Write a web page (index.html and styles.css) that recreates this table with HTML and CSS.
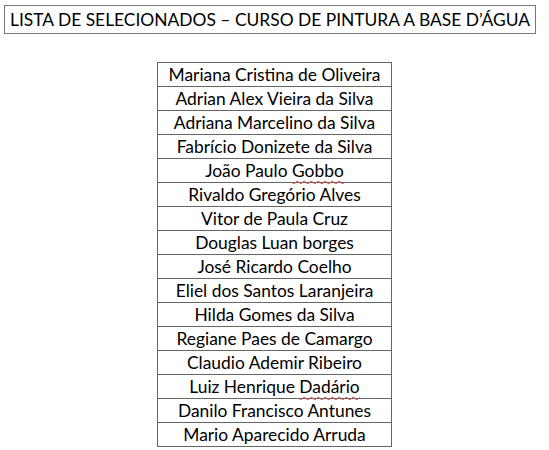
FILE: index.html
```html
<!DOCTYPE html>
<html lang="pt">
<head>
<meta charset="utf-8">
<link rel="stylesheet" href="styles.css">
</head>
<body>
<div class="title">LISTA DE SELECIONADOS – CURSO DE PINTURA A BASE D’ÁGUA</div>
<table class="list">
<tr><td>Mariana Cristina de Oliveira</td></tr>
<tr><td>Adrian Alex Vieira da Silva</td></tr>
<tr><td>Adriana Marcelino da Silva</td></tr>
<tr><td>Fabrício Donizete da Silva</td></tr>
<tr><td>João Paulo <span class="sp">Gobbo</span></td></tr>
<tr><td>Rivaldo Gregório Alves</td></tr>
<tr><td>Vitor de Paula Cruz</td></tr>
<tr><td>Douglas Luan borges</td></tr>
<tr><td>José Ricardo Coelho</td></tr>
<tr><td>Eliel dos Santos Laranjeira</td></tr>
<tr><td>Hilda Gomes da Silva</td></tr>
<tr><td>Regiane Paes de Camargo</td></tr>
<tr><td>Claudio Ademir Ribeiro</td></tr>
<tr><td>Luiz Henrique <span class="sp">Dadário</span></td></tr>
<tr><td>Danilo Francisco Antunes</td></tr>
<tr><td>Mario Aparecido Arruda</td></tr>
</table>
</body>
</html>
```
FILE: styles.css
```css
html, body {
  margin: 0;
  padding: 0;
  background: #fff;
}
body {
  font-family: Lato, "Open Sans", sans-serif;
  color: #000;
}
.title {
  box-sizing: border-box;
  margin: 5px 0 0 4px;
  width: 532px;
  height: 29px;
  border: 1px solid #777;
  font-size: 17.4px;
  line-height: 27px;
  text-align: center;
  white-space: nowrap;
}
.list {
  border-collapse: collapse;
  margin: 28px 0 0 157px;
  width: 235px;
}
.list td {
  box-sizing: border-box;
  border: 1px solid #666;
  height: 24px;
  padding: 0;
  font-size: 17.4px;
  line-height: 22px;
  text-align: center;
  white-space: nowrap;
}
.sp {
  text-decoration: underline wavy #d44;
  text-decoration-thickness: 1px;
  text-underline-offset: 3px;
}
```
